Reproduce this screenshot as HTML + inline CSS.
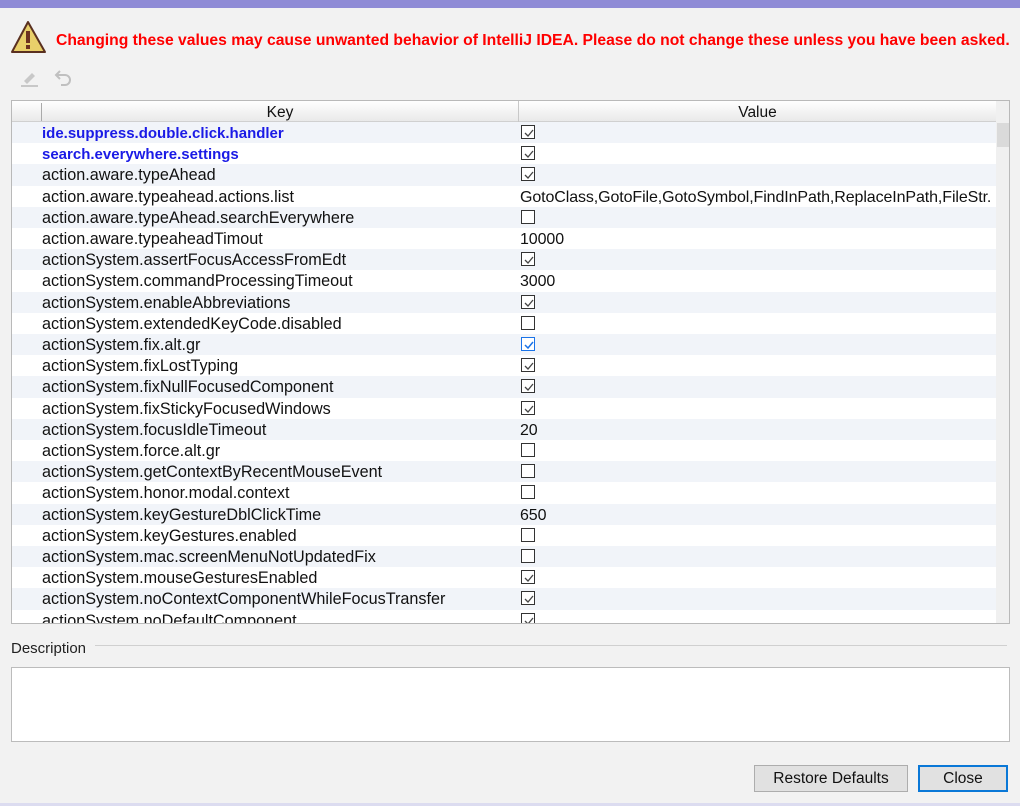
<!DOCTYPE html>
<html><head><meta charset="utf-8"><style>
*{margin:0;padding:0;box-sizing:border-box}
body{width:1020px;height:806px;background:#f2f2f2;font-family:"Liberation Sans","Noto Sans CJK SC",sans-serif;font-size:15px;color:#111;position:relative;overflow:hidden}
.abs{position:absolute}
.row{position:absolute;left:0;width:984px;height:21.2px;line-height:23px;white-space:nowrap;font-size:16.2px}
.row:nth-child(odd){background:#f1f4f9}
.row:nth-child(even){background:#fff}
.k{position:absolute;left:30px}
.v{position:absolute;left:508px;letter-spacing:-0.1px}
.b{font-weight:bold;color:#1a1ae6;font-size:15px}
.cb{position:absolute;left:509px;top:3px;width:14px;height:14px;border:1px solid #333;background:#fff}
.cb svg{position:absolute;left:1px;top:1px}
.cb.blue{border-color:#1a73e8}
.btn{position:absolute;height:27px;background:#e1e1e1;border:1px solid #adadad;text-align:center;line-height:26px;font-size:15.5px}
</style></head><body>
<div class="abs" style="left:0;top:0;width:1020px;height:8px;background:#8f8bd6"></div>
<svg class="abs" style="left:10px;top:20px" width="38" height="36" viewBox="0 0 38 36"><polygon points="18,2 35,32 2,32" fill="#e8cf6a" stroke="#5a3020" stroke-width="2" stroke-linejoin="round"/><rect x="16" y="11" width="4" height="12" fill="#6a3020"/><rect x="16" y="25" width="4" height="4" fill="#6a3020"/></svg>
<div class="abs" style="left:56px;top:32px;font-weight:bold;color:#f00;font-size:15.7px;white-space:nowrap">Changing these values may cause unwanted behavior of IntelliJ IDEA. Please do not change these unless you have been asked.</div>
<svg class="abs" style="left:20px;top:68px" width="20" height="20"><path d="M4 13 L12 5 L15 8 L7 16 Z" fill="#c8c8c8"/><rect x="1" y="17" width="17" height="2" fill="#c8c8c8"/></svg>
<svg class="abs" style="left:53px;top:68px" width="20" height="20"><path d="M4 7 H12 A5 5 0 0 1 12 17 H8" fill="none" stroke="#c0c0c0" stroke-width="2"/><path d="M7 3 L3 7 L7 11" fill="none" stroke="#c0c0c0" stroke-width="2"/></svg>
<div class="abs" style="left:11px;top:100px;width:999px;height:524px;border:1px solid #b9b9b9;background:#fff;overflow:hidden">
 <div class="abs" style="left:0;top:0;width:984px;height:21px;background:linear-gradient(#fff,#e9e9e9);border-bottom:1px solid #d0d0d0"></div>
 <div class="abs" style="left:29px;top:2px;width:1px;height:18px;background:#aaa"></div>
 <div class="abs" style="left:506px;top:0;width:1px;height:21px;background:#c8c8c8"></div>
 <div class="abs" style="left:30px;width:476px;top:3px;text-align:center;font-size:15.5px">Key</div>
 <div class="abs" style="left:507px;width:477px;top:3px;text-align:center;font-size:15.5px">Value</div>
 <div class="abs" style="left:984px;top:0;width:14px;height:522px;background:#f0f0f0"></div>
 <div class="abs" style="left:985px;top:22px;width:12px;height:24px;background:#dadada"></div>
 <div class="abs" style="left:0;top:21px;width:984px;height:501px;overflow:hidden" id="rows">
 </div>
</div>
<div class="abs" style="left:11px;top:640px;font-size:15px;color:#222">Description</div>
<div class="abs" style="left:95px;top:645px;width:912px;height:1px;background:#d0d0d0"></div>
<div class="abs" style="left:11px;top:667px;width:999px;height:75px;border:1px solid #bcbcbc;background:#fff"></div>
<div class="btn" style="left:754px;top:765px;width:154px">Restore Defaults</div>
<div class="btn" style="left:918px;top:765px;width:90px;border:2px solid #0a78d7;line-height:24px">Close</div>
<div class="abs" style="left:0;top:803px;width:1020px;height:3px;background:#dcdcf0"></div>
<script>
var d=[["ide.suppress.double.click.handler","c",1],["search.everywhere.settings","c",1],["action.aware.typeAhead","c"],["action.aware.typeahead.actions.list","GotoClass,GotoFile,GotoSymbol,FindInPath,ReplaceInPath,FileStr."],["action.aware.typeAhead.searchEverywhere","u"],["action.aware.typeaheadTimout","10000"],["actionSystem.assertFocusAccessFromEdt","c"],["actionSystem.commandProcessingTimeout","3000"],["actionSystem.enableAbbreviations","c"],["actionSystem.extendedKeyCode.disabled","u"],["actionSystem.fix.alt.gr","b"],["actionSystem.fixLostTyping","c"],["actionSystem.fixNullFocusedComponent","c"],["actionSystem.fixStickyFocusedWindows","c"],["actionSystem.focusIdleTimeout","20"],["actionSystem.force.alt.gr","u"],["actionSystem.getContextByRecentMouseEvent","u"],["actionSystem.honor.modal.context","u"],["actionSystem.keyGestureDblClickTime","650"],["actionSystem.keyGestures.enabled","u"],["actionSystem.mac.screenMenuNotUpdatedFix","u"],["actionSystem.mouseGesturesEnabled","c"],["actionSystem.noContextComponentWhileFocusTransfer","c"],["actionSystem.noDefaultComponent","c"]];
var h="";
d.forEach(function(r,i){
 var v=r[1],val;
 if(v=="c")val='<div class="cb"><svg width="12" height="12"><path d="M2 6 L5 9 L10 3" fill="none" stroke="#444" stroke-width="1.3"/></svg></div>';
 else if(v=="b")val='<div class="cb blue"><svg width="12" height="12"><path d="M2 6 L5 9 L10 3" fill="none" stroke="#1a73e8" stroke-width="1.5"/></svg></div>';
 else if(v=="u")val='<div class="cb"></div>';
 else val='<span class="v" style="font-size:16px">'+v+'</span>';
 h+='<div class="row" style="top:'+(i*21.2).toFixed(1)+'px"><span class="k'+(r[2]?' b':'')+'">'+r[0]+'</span>'+val+'</div>';
});
document.getElementById("rows").innerHTML=h;
</script>
</body></html>
